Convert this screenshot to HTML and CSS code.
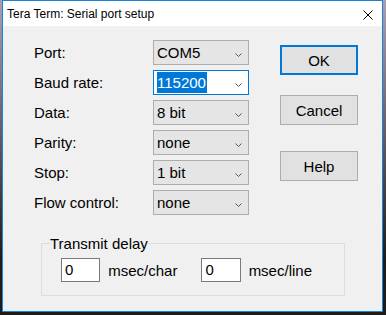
FILE: index.html
```html
<html>
  <head>
    <link rel="stylesheet" href="styles.css">
    <title>Tera Term: Serial port setup</title>
  </head>
  <body>
    <div class="window">
      <div class="titlebar">
        <span class="title">Tera Term: Serial port setup</span>
        <span class="close">
          <svg width="10" height="10" viewBox="0 0 10 10"><path d="M0.5 0.5 L9.5 9.5 M9.5 0.5 L0.5 9.5" stroke="#000" stroke-width="1" fill="none"/></svg>
        </span>
      </div>
      <div class="dialog">
        <div class="top">
          <div class="fields">
            <label>Port:</label>
            <div class="combo"><span>COM5</span><svg class="chev" width="7" height="4" viewBox="0 0 7 4"><path d="M0.5 0.5 L3.5 3.5 L6.5 0.5" stroke="#555" fill="none"/></svg></div>
            <label>Baud rate:</label>
            <div class="combo focus"><span class="sel">115200</span><svg class="chev" width="7" height="4" viewBox="0 0 7 4"><path d="M0.5 0.5 L3.5 3.5 L6.5 0.5" stroke="#555" fill="none"/></svg></div>
            <label>Data:</label>
            <div class="combo"><span>8 bit</span><svg class="chev" width="7" height="4" viewBox="0 0 7 4"><path d="M0.5 0.5 L3.5 3.5 L6.5 0.5" stroke="#555" fill="none"/></svg></div>
            <label>Parity:</label>
            <div class="combo"><span>none</span><svg class="chev" width="7" height="4" viewBox="0 0 7 4"><path d="M0.5 0.5 L3.5 3.5 L6.5 0.5" stroke="#555" fill="none"/></svg></div>
            <label>Stop:</label>
            <div class="combo"><span>1 bit</span><svg class="chev" width="7" height="4" viewBox="0 0 7 4"><path d="M0.5 0.5 L3.5 3.5 L6.5 0.5" stroke="#555" fill="none"/></svg></div>
            <label>Flow control:</label>
            <div class="combo"><span>none</span><svg class="chev" width="7" height="4" viewBox="0 0 7 4"><path d="M0.5 0.5 L3.5 3.5 L6.5 0.5" stroke="#555" fill="none"/></svg></div>
          </div>
          <div class="actions">
            <button class="btn default">OK</button>
            <button class="btn cancel">Cancel</button>
            <button class="btn help">Help</button>
          </div>
        </div>
        <fieldset class="delay">
          <legend>Transmit delay</legend>
          <div class="delay-row">
            <div class="edit">0</div>
            <span class="unit">msec/char</span>
            <div class="edit">0</div>
            <span class="unit">msec/line</span>
          </div>
        </fieldset>
      </div>
    </div>
  </body>
</html>
```

FILE: styles.css
```css
body {
  margin: 0;
  width: 386px;
  height: 315px;
  background: linear-gradient(to bottom, #a99fb3 0px, #6a6470 120px, #1c1c1c 260px);
  font-family: "Liberation Sans", Arial, sans-serif;
  overflow: hidden;
}

.window {
  margin-left: 2px;
  width: 381px;
  height: 312px;
  box-sizing: border-box;
  border: 1px solid #1883d7;
  background: #f0f0f0;
  display: flex;
  flex-direction: column;
}

.titlebar {
  height: 25px;
  background: #fff;
  display: flex;
  align-items: center;
  justify-content: space-between;
}
.title {
  font-size: 12px;
  color: #000;
  padding-left: 4px;
  margin-top: 1px;
}
.close {
  display: flex;
  margin-right: 9px;
  margin-top: 2px;
}

.dialog {
  padding: 14px 0 0 31px;
  font-size: 15px;
  color: #000;
}

.top {
  display: flex;
  align-items: flex-start;
}

.fields {
  display: grid;
  grid-template-columns: 119px 96px;
  grid-auto-rows: 25px;
  row-gap: 5px;
}
.fields label {
  display: flex;
  align-items: center;
}

.combo {
  box-sizing: border-box;
  border: 1px solid #adadad;
  background: #e5e5e5;
  display: flex;
  align-items: center;
  justify-content: space-between;
  padding: 0 6px 0 3px;
}
.combo.focus {
  background: #fff;
  border-color: #0078d7;
}
.combo .sel {
  background: #0078d7;
  color: #fff;
  line-height: 21px;
  padding-right: 1px;
}
.chev {
  margin-top: 5px;
}

.actions {
  margin-left: 31px;
  display: flex;
  flex-direction: column;
}
.btn {
  width: 78px;
  height: 30px;
  box-sizing: border-box;
  border: 1px solid #adadad;
  background: #e1e1e1;
  font-family: "Liberation Sans", Arial, sans-serif;
  font-size: 15px;
  color: #000;
  padding: 0;
}
.btn.default {
  margin-top: 5px;
  border: 2px solid #0078d7;
}
.btn.cancel {
  margin-top: 20px;
}
.btn.help {
  margin-top: 26px;
}

.delay {
  margin: 20px 0 0 7px;
  width: 304px;
  box-sizing: border-box;
  border: 1px solid #dcdcdc;
  padding: 0 8px;
  min-width: 0;
}
.delay legend {
  padding: 0;
  line-height: 17px;
}
.delay-row {
  display: flex;
  align-items: center;
  margin: 6px 0 13px 11px;
}
.edit {
  width: 40px;
  height: 24px;
  box-sizing: border-box;
  border: 1px solid #7a7a7a;
  background: #fff;
  padding-left: 3px;
  line-height: 21px;
}
.unit {
  margin-left: 8px;
  margin-right: 24px;
}
```
